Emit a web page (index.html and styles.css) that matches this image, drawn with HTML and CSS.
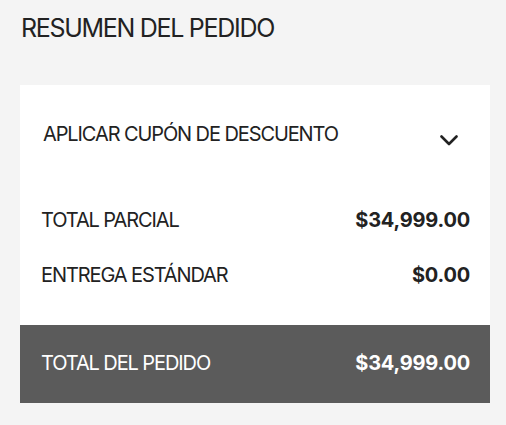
FILE: index.html
```html
<!DOCTYPE html>
<html lang="es">
<head>
<meta charset="utf-8">
<link rel="stylesheet" href="styles.css">
</head>
<body>
<div class="summary">
  <h2 class="title">RESUMEN DEL PEDIDO</h2>
  <div class="card">
    <div class="coupon">
      <span class="coupon-label">APLICAR CUPÓN DE DESCUENTO</span>
      <svg class="chevron" width="18" height="11" viewBox="0 0 18 11"><path d="M1.5 1.5 L9 9 L16.5 1.5" fill="none" stroke="#222" stroke-width="2.6" stroke-linecap="round" stroke-linejoin="round"/></svg>
    </div>
    <div class="lines">
      <div class="line"><span class="label">TOTAL PARCIAL</span><span class="amount">$34,999.00</span></div>
      <div class="line"><span class="label">ENTREGA ESTÁNDAR</span><span class="amount">$0.00</span></div>
    </div>
    <div class="total">
      <span class="label">TOTAL DEL PEDIDO</span><span class="amount">$34,999.00</span>
    </div>
  </div>
</div>
</body>
</html>
```

FILE: styles.css
```css
html, body {
  margin: 0;
  padding: 0;
  background: #f4f4f4;
}
body {
  font-family: Inter, "Liberation Sans", sans-serif;
  color: #222;
}
.summary {
  padding: 13px 16px 0 20px;
}
.title {
  margin: 0 0 0 1px;
  font-size: 25px;
  font-weight: 400;
  line-height: 30px;
  letter-spacing: -1.3px;
  color: #222;
}
.card {
  margin-top: 42px;
  background: #fff;
  width: 470px;
}
.coupon {
  display: flex;
  align-items: flex-start;
  justify-content: space-between;
  padding: 37px 32px 0 23px;
  height: 24px;
}
.coupon-label, .label {
  font-size: 20px;
  letter-spacing: -1.1px;
  line-height: 24px;
}
.chevron {
  margin-top: 13px;
}
.lines {
  padding: 62px 20px 38px 21px;
  display: flex;
  flex-direction: column;
  gap: 31px;
}
.line, .total {
  display: flex;
  justify-content: space-between;
  align-items: center;
}
.amount {
  font-size: 20px;
  font-weight: 700;
  line-height: 24px;
  letter-spacing: -0.2px;
}
.total {
  background: #5b5b5b;
  color: #fff;
  height: 78px;
  padding: 0 20px 0 21px;
}
.total .amount {
  margin-top: -3px;
}
.total .label {
  margin-top: -3px;
}
```
